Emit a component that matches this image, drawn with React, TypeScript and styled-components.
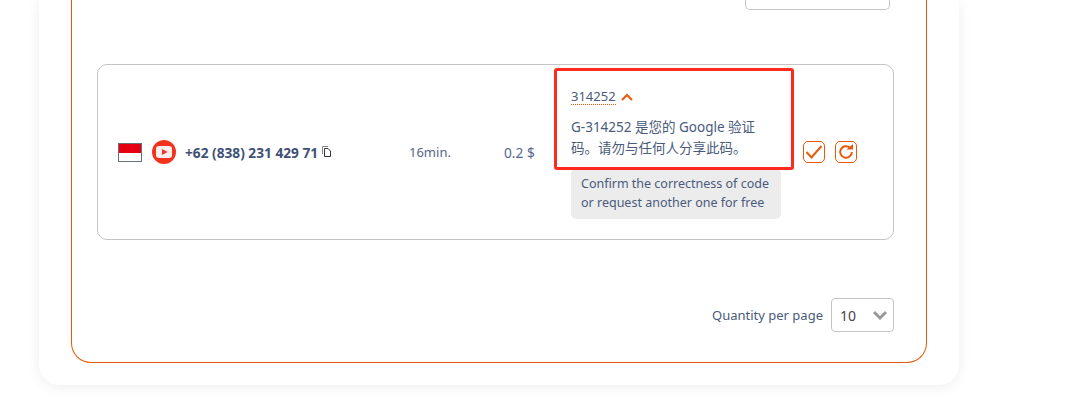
import React from 'react';
import styled, { createGlobalStyle } from 'styled-components';

const GlobalStyle = createGlobalStyle`
  html, body {
    margin: 0;
    padding: 0;
    background: #fff;
    overflow: hidden;
  }
  body {
    font-family: 'Noto Sans', 'Noto Sans CJK SC', sans-serif;
    color: #4a5b7c;
  }
`;

const Page = styled.div`
  width: 1083px;
  height: 413px;
  overflow: hidden;
  display: flex;
  flex-direction: column;
  justify-content: flex-end;
  padding: 0 124px 28px 39px;
  box-sizing: border-box;
`;

const Card = styled.div`
  flex: none;
  background: #fff;
  border-radius: 0 0 20px 20px;
  box-shadow: 0 2px 14px rgba(0, 0, 0, 0.07);
  padding: 0 32px 22px;
`;

const Frame = styled.section`
  border: 1px solid #e8590c;
  border-top: 0;
  border-radius: 0 0 20px 20px;
  padding: 0 32px 30px 25px;
`;

const TopBar = styled.div`
  display: flex;
  justify-content: flex-end;
  padding-right: 4px;
  margin-bottom: 54px;
`;

const TopSelect = styled.div`
  width: 145px;
  height: 10px;
  box-sizing: border-box;
  border: 1px solid #c4c4c4;
  border-top: 0;
  border-radius: 0 0 5px 5px;
`;

const Row = styled.div`
  height: 176px;
  box-sizing: border-box;
  border: 1px solid #c4c4c4;
  border-radius: 10px;
  padding-left: 20px;
  display: grid;
  grid-template-columns: 291px 95px 67px 232px auto;
  align-items: center;
  font-size: 13px;
`;

const PhoneCell = styled.div`
  display: flex;
  align-items: center;
`;

const Flag = styled.div`
  width: 24px;
  height: 19px;
  box-sizing: border-box;
  border: 1px solid #6a7078;
  background: linear-gradient(#e60012 50%, #fff 50%);
  margin-right: 10px;
`;

const Phone = styled.span`
  font-size: 13.7px;
  font-weight: 700;
  color: #3f5176;
  margin-left: 9px;
  white-space: nowrap;
`;

const CopyIcon = styled.svg`
  width: 11px;
  height: 13px;
  margin-left: 3px;
  margin-top: -2px;
`;

const Duration = styled.div`
  color: #55658a;
`;

const Price = styled.div`
  font-size: 13.7px;
  color: #55658a;
`;

const CodeCell = styled.div`
  position: relative;
  display: flex;
  flex-direction: column;
  align-items: flex-start;
`;

const CodeLine = styled.div`
  display: flex;
  align-items: center;
  gap: 4px;
  height: 22px;
`;

const Code = styled.span`
  border-bottom: 1px dotted #e8590c;
  line-height: 15px;
  font-size: 13px;
`;

const Message = styled.p`
  margin: 9px 0 10px;
  width: 200px;
  font-size: 13.5px;
  line-height: 21px;
  font-family: 'Noto Sans', 'Noto Sans CJK SC', sans-serif;
`;

const Hint = styled.div`
  width: 210px;
  box-sizing: border-box;
  background: #ececec;
  border-radius: 5px;
  padding: 5px 10px 7px;
  font-size: 12.5px;
  line-height: 19px;
  white-space: nowrap;
`;

const Annotation = styled.div`
  position: absolute;
  left: -17px;
  top: -18px;
  width: 240px;
  height: 102px;
  box-sizing: border-box;
  border: 3px solid #ff2a1f;
  border-radius: 3px;
`;

const Actions = styled.div`
  display: flex;
  gap: 10px;
`;

const ActionButton = styled.button`
  width: 22px;
  height: 22px;
  padding: 0;
  background: #fff;
  border: 1px solid #e8590c;
  border-radius: 5px;
  display: flex;
  align-items: center;
  justify-content: center;
`;

const Footer = styled.div`
  display: flex;
  justify-content: flex-end;
  align-items: center;
  gap: 8px;
  margin-top: 58px;
  font-size: 13px;
`;

const PageSize = styled.div`
  width: 63px;
  height: 34px;
  box-sizing: border-box;
  border: 1px solid #c4c4c4;
  border-radius: 4px;
  padding: 0 5px 0 8px;
  display: flex;
  align-items: center;
  justify-content: space-between;
  font-size: 14px;
  color: #444;
`;

const App = () => {
  return (
    <>
      <GlobalStyle />
      <Page>
        <Card>
          <Frame>
            <TopBar>
              <TopSelect />
            </TopBar>
            <Row>
              <PhoneCell>
                <Flag />
                <svg width="24" height="24" viewBox="0 0 24 24">
                  <circle cx="12" cy="12" r="12" fill="#f4331f" />
                  <rect x="4" y="6" width="16" height="12" rx="3" fill="#fbeeee" />
                  <path d="M10 9l5.5 3-5.5 3z" fill="#f4331f" />
                </svg>
                <Phone>+62 (838) 231 429 71</Phone>
                <CopyIcon viewBox="0 0 11 13" fill="none" stroke="#333" strokeWidth="1">
                  <path d="M7 1.5H1.500V9" stroke="#888" />
                  <path d="M3.500 3.500H7l2.500 2.500V11.500h-6z" />
                </CopyIcon>
              </PhoneCell>
              <Duration>16min.</Duration>
              <Price>0.2 $</Price>
              <CodeCell>
                <CodeLine>
                  <Code>314252</Code>
                  <svg width="14" height="10" viewBox="0 0 14 10" fill="none">
                    <path d="M2 8l5-5 5 5" stroke="#e8590c" strokeWidth="2" />
                  </svg>
                </CodeLine>
                <Message>G-314252 是您的 Google 验证码。请勿与任何人分享此码。</Message>
                <Hint>
                  Confirm the correctness of code
                  <br />
                  or request another one for free
                </Hint>
                <Annotation />
              </CodeCell>
              <Actions>
                <ActionButton>
                  <svg width="18" height="16" viewBox="0 0 18 16" fill="none">
                    <path d="M1.500 8l5 5.500L16.500 2" stroke="#e8590c" strokeWidth="2" />
                  </svg>
                </ActionButton>
                <ActionButton>
                  <svg width="18" height="18" viewBox="0 0 18 18" fill="none">
                    <path d="M14.800 9a5.800 5.800 0 1 1-2.100-4.500" stroke="#e8590c" strokeWidth="2" />
                    <path d="M9.500 6.500H16V1z" fill="#e8590c" />
                  </svg>
                </ActionButton>
              </Actions>
            </Row>
            <Footer>
              <span>Quantity per page</span>
              <PageSize>
                10
                <svg width="16" height="10" viewBox="0 0 16 10" fill="none">
                  <path d="M2 2l6 6 6-6" stroke="#9a9a9a" strokeWidth="3" />
                </svg>
              </PageSize>
            </Footer>
          </Frame>
        </Card>
      </Page>
    </>
  );
};

export default App;
